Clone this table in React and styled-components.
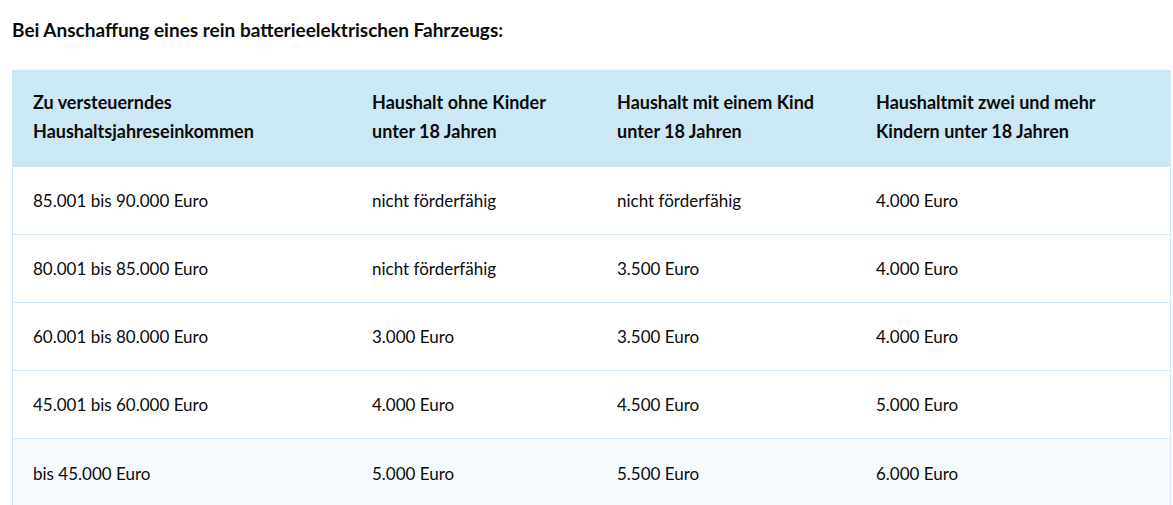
import { createGlobalStyle, styled } from "styled-components";

const GlobalStyle = createGlobalStyle`
  * {
    box-sizing: border-box;
  }
  body {
    margin: 0;
    background: #ffffff;
    font-family: Lato, "Noto Sans", "Liberation Sans", sans-serif;
    color: #0b0b0b;
  }
`;

const Wrapper = styled.div`
  padding: 16px 2px 0 12px;
`;

const Title = styled.h3`
  margin: 0 0 26px 0;
  font-size: 19px;
  font-weight: 700;
  line-height: 28px;
`;

const Table = styled.div`
  display: grid;
  grid-template-columns: 339px 245px 259px 1fr;
  border-left: 1px solid #d3e8f5;
  border-right: 1px solid #d3e8f5;
`;

const Row = styled.div`
  display: contents;
`;

const Cell = styled.div`
  display: flex;
  align-items: center;
  padding: ${(p) => (p.$head ? "0 20px 3px" : "0 20px")};
  font-size: ${(p) => (p.$head ? "18px" : "17px")};
  line-height: 29px;
  height: ${(p) => (p.$head ? "97px" : "68px")};
  font-weight: ${(p) => (p.$head ? 700 : 400)};
  white-space: nowrap;
  background: ${(p) => (p.$head ? "#cce8f4" : p.$last ? "#f5fafd" : "#ffffff")};
  border-bottom: ${(p) => (p.$head || p.$last ? "none" : "1px solid #d3e8f5")};
`;

const head = [
  ["Zu versteuerndes", "Haushaltsjahreseinkommen"],
  ["Haushalt ohne Kinder", "unter 18 Jahren"],
  ["Haushalt mit einem Kind", "unter 18 Jahren"],
  ["Haushaltmit zwei und mehr", "Kindern unter 18 Jahren"],
];

const rows = [
  ["85.001 bis 90.000 Euro", "nicht förderfähig", "nicht förderfähig", "4.000 Euro"],
  ["80.001 bis 85.000 Euro", "nicht förderfähig", "3.500 Euro", "4.000 Euro"],
  ["60.001 bis 80.000 Euro", "3.000 Euro", "3.500 Euro", "4.000 Euro"],
  ["45.001 bis 60.000 Euro", "4.000 Euro", "4.500 Euro", "5.000 Euro"],
  ["bis 45.000 Euro", "5.000 Euro", "5.500 Euro", "6.000 Euro"],
];

function App() {
  return (
    <Wrapper>
      <GlobalStyle />
      <Title>Bei Anschaffung eines rein batterieelektrischen Fahrzeugs:</Title>
      <Table>
        <Row>
          {head.map((h) => (
            <Cell $head key={h[0]}>
              <span>
                {h[0]}
                <br />
                {h[1]}
              </span>
            </Cell>
          ))}
        </Row>
        {rows.map((r, i) => (
          <Row key={r[0]}>
            {r.map((c, j) => (
              <Cell key={j} $last={i === rows.length - 1}>
                {c}
              </Cell>
            ))}
          </Row>
        ))}
      </Table>
    </Wrapper>
  );
}

export default App;
